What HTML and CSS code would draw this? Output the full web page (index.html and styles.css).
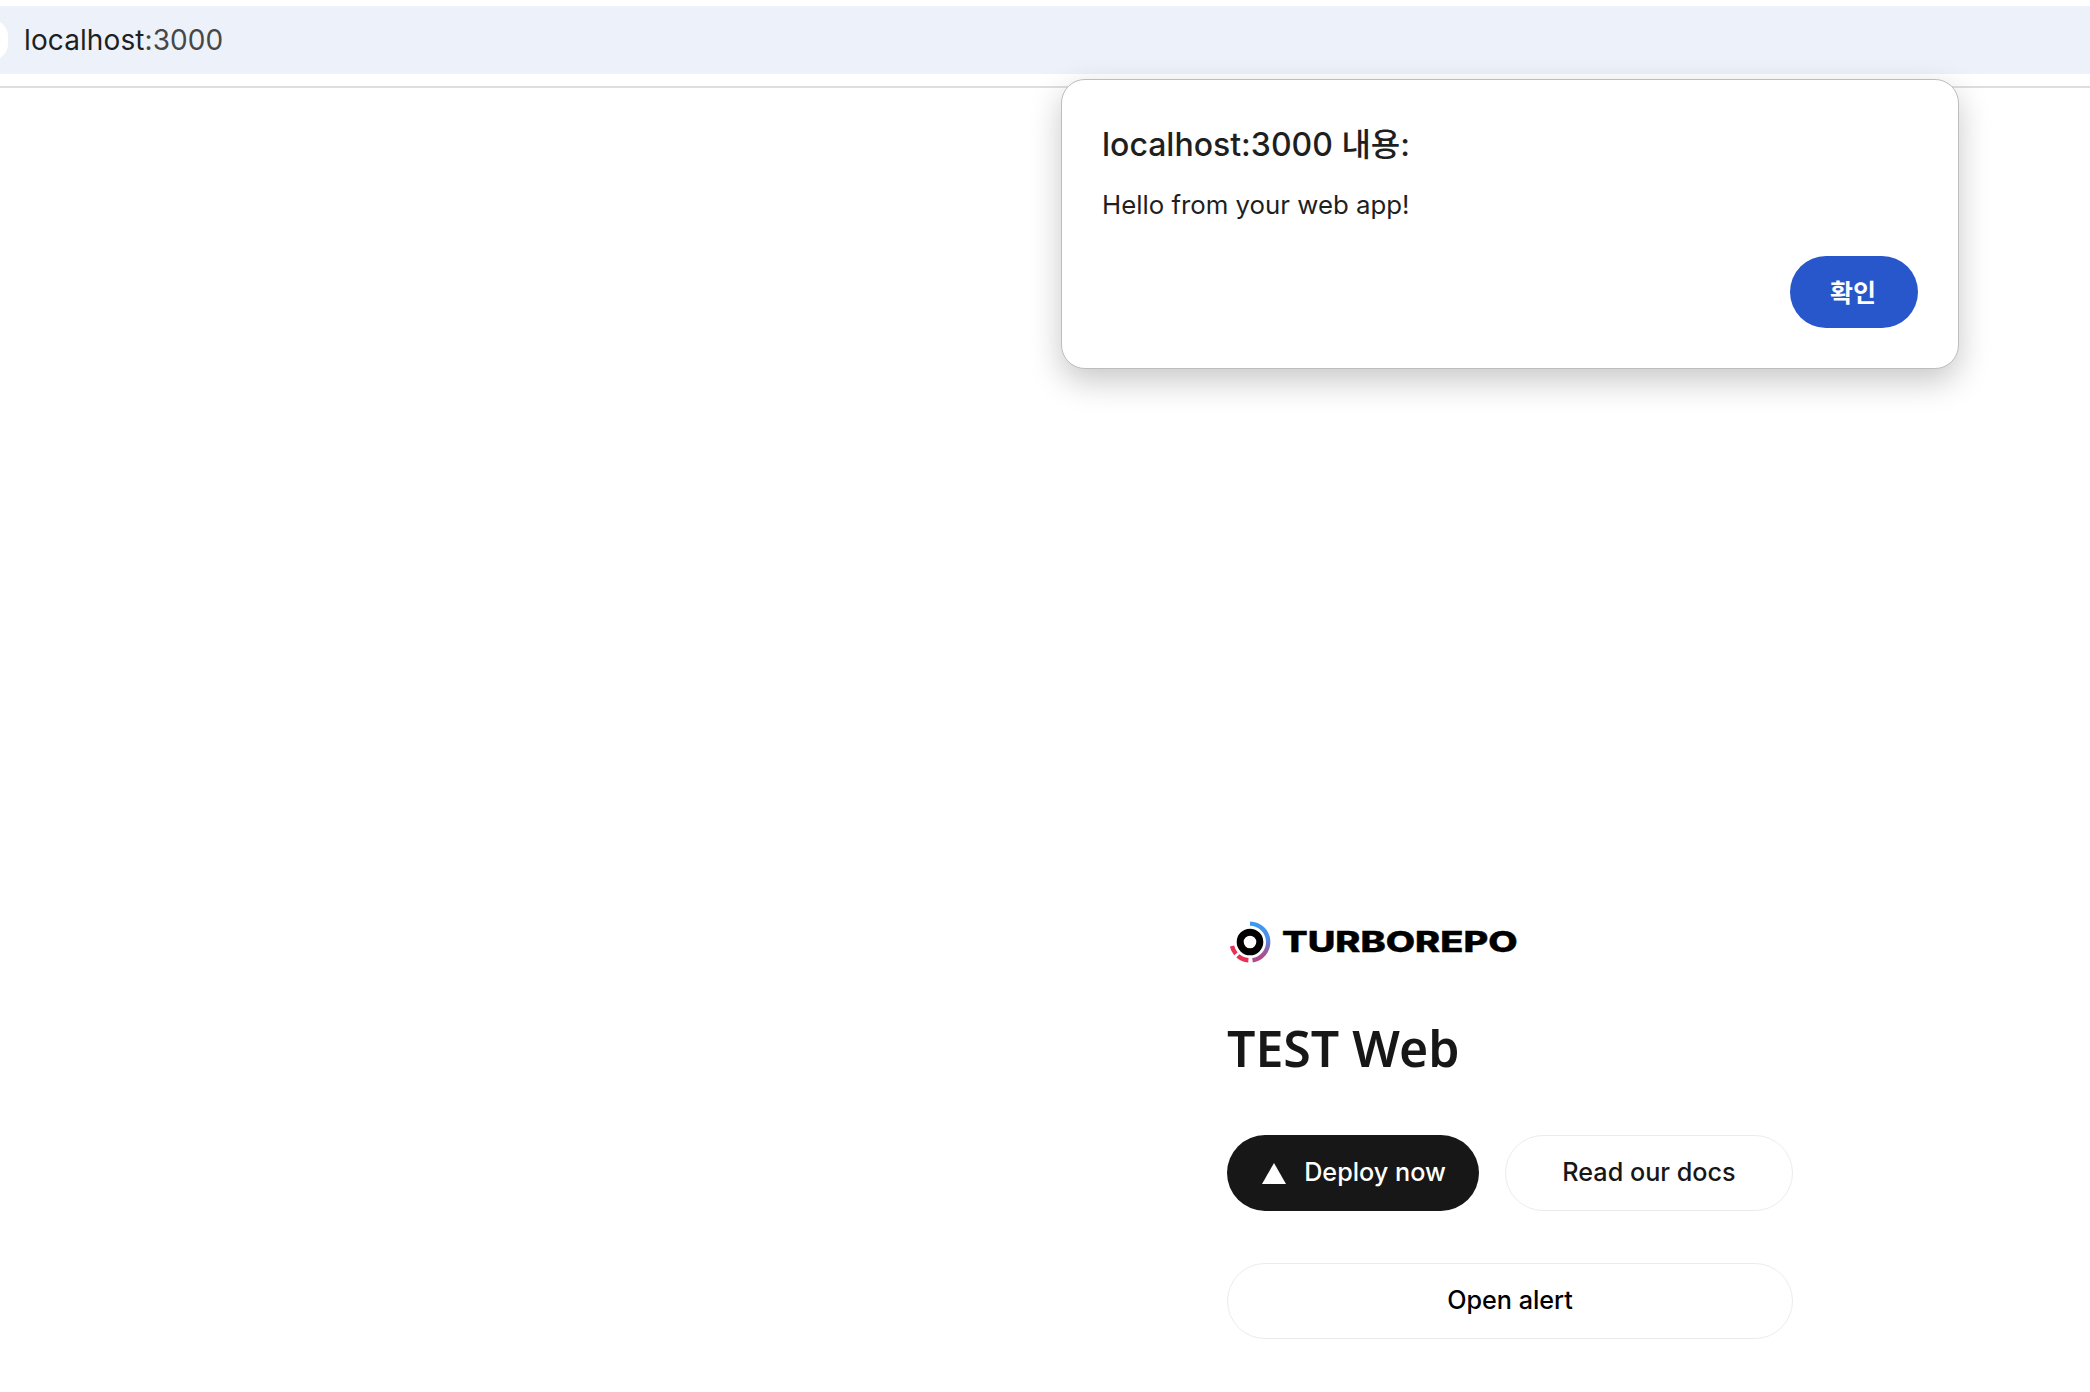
FILE: index.html
```html
<!DOCTYPE html>
<html lang="ko">
<head>
<meta charset="utf-8">
<title>TEST Web</title>
<link rel="stylesheet" href="styles.css">
</head>
<body>
<header class="toolbar">
  <div class="urlbar">
    <span class="site-chip"></span>
    <span class="url"><span class="host">localhost</span><span class="port">:3000</span></span>
  </div>
</header>
<div class="dialog" role="alertdialog">
  <h2 class="dialog-title">localhost:3000 내용:</h2>
  <p class="dialog-msg">Hello from your web app!</p>
  <div class="dialog-actions"><button class="dialog-ok">확인</button></div>
</div>
<main class="page">
  <div class="logo">
    <svg class="logo-mark" width="42" height="42" viewBox="0 0 42 42" aria-hidden="true">
      <defs>
        <linearGradient id="ringBlue" x1="0.2" y1="0" x2="0.4" y2="1">
          <stop offset="0" stop-color="#3a9bf0"/>
          <stop offset="0.55" stop-color="#4f8fe6"/>
          <stop offset="1" stop-color="#b8457f"/>
        </linearGradient>
      </defs>
      <circle cx="21" cy="21" r="9.8" fill="none" stroke="#000" stroke-width="7"/>
      <path d="M21 2.6A18.4 18.4 0 0 1 23.5 39.2" fill="none" stroke="url(#ringBlue)" stroke-width="4.4"/>
      <path d="M19.4 39.3A18.4 18.4 0 0 1 8.8 34.8" fill="none" stroke="#ea2f55" stroke-width="4.4"/>
      <path d="M6.9 32.8A18.4 18.4 0 0 1 3 25" fill="none" stroke="#ea2f55" stroke-width="4.4"/>
    </svg>
    <span class="wordmark">TURBOREPO</span>
  </div>
  <h1 class="title">TEST Web</h1>
  <div class="cta-row">
    <a class="btn btn-primary">
      <svg class="vercel" width="24" height="21" viewBox="0 0 24 21" aria-hidden="true"><path d="M12 0 24 21H0Z" fill="#fff"/></svg>
      <span class="btn-label">Deploy now</span>
    </a>
    <a class="btn btn-ghost btn-docs"><span class="btn-label">Read our docs</span></a>
  </div>
  <button class="btn btn-ghost btn-alert"><span class="btn-label">Open alert</span></button>
</main>
</body>
</html>
```
FILE: styles.css
```css
* { box-sizing: border-box; }
html, body { margin: 0; height: 100%; background: #fff; overflow: hidden; }
body { font-family: Inter, "Noto Sans CJK KR", sans-serif; color: #171717; }

.toolbar {
  height: 88px;
  padding-top: 6px;
  border-bottom: 2px solid #dedede;
}
.urlbar {
  height: 68px;
  background: #edf2fa;
  display: flex;
  align-items: center;
  gap: 16px;
  overflow: hidden;
}
.site-chip {
  width: 16px;
  height: 40px;
  margin-left: -8px;
  border-radius: 0 20px 20px 0;
  background: #fff;
}
.url { font-size: 28px; letter-spacing: 0.1px; }
.host { color: #1f1f1f; }
.port { color: #474747; }

.dialog {
  position: absolute;
  left: 1061px;
  top: 79px;
  width: 898px;
  height: 290px;
  padding: 47px 40px 40px;
  background: #fff;
  border: 1px solid #bdbdbd;
  border-radius: 24px;
  box-shadow: 0 12px 32px rgba(0, 0, 0, 0.22);
  display: flex;
  flex-direction: column;
}
.dialog-title {
  margin: 0;
  font-size: 32px;
  line-height: 36px;
  font-weight: 500;
  color: #1f1f1f;
}
.dialog-msg {
  margin: 25px 0 0;
  font-size: 25.8px;
  line-height: 34px;
  color: #1f1f1f;
}
.dialog-actions { margin-top: auto; display: flex; justify-content: flex-end; }
.dialog-ok {
  width: 128px;
  height: 72px;
  padding: 0 2px 3px 0;
  border: 0;
  border-radius: 36px;
  background: #2856cb;
  color: #fff;
  font: 600 25px Inter, "Noto Sans CJK KR", sans-serif;
}

.page {
  padding: 0 0 0 1227px;
  display: flex;
  flex-direction: column;
  width: 1793px;
}
.logo {
  margin-top: 832px;
  height: 44px;
  display: flex;
  align-items: center;
  gap: 11px;
}
.logo-mark { margin-left: 2px; flex: none; }
.wordmark {
  font: 800 28px Inter, sans-serif;
  display: inline-block;
  transform: scaleX(1.357);
  transform-origin: left center;
  color: #000;
  -webkit-text-stroke: 0.4px #000;
}
.title {
  margin: 54px 0 0;
  font: 600 50px/60px "Noto Sans", sans-serif;
  color: #171717;
}
.cta-row {
  margin-top: 57px;
  display: flex;
  gap: 25px;
}
.btn {
  height: 76px;
  padding: 0;
  border-radius: 38px;
  display: flex;
  align-items: center;
  justify-content: center;
  font: 550 25.2px Inter, sans-serif;
  color: #171717;
  background: #fff;
}
.btn-label { margin-bottom: 2px; }
.btn-primary {
  width: 252px;
  gap: 18px;
  padding-left: 2px;
  background: #171717;
  color: #fff;
}
.btn-ghost { border: 1px solid #ececec; }
.btn-docs { width: 288px; margin-left: 1px; }
.btn-alert {
  margin-top: 52px;
  width: 566px;
  color: #000;
}
```
